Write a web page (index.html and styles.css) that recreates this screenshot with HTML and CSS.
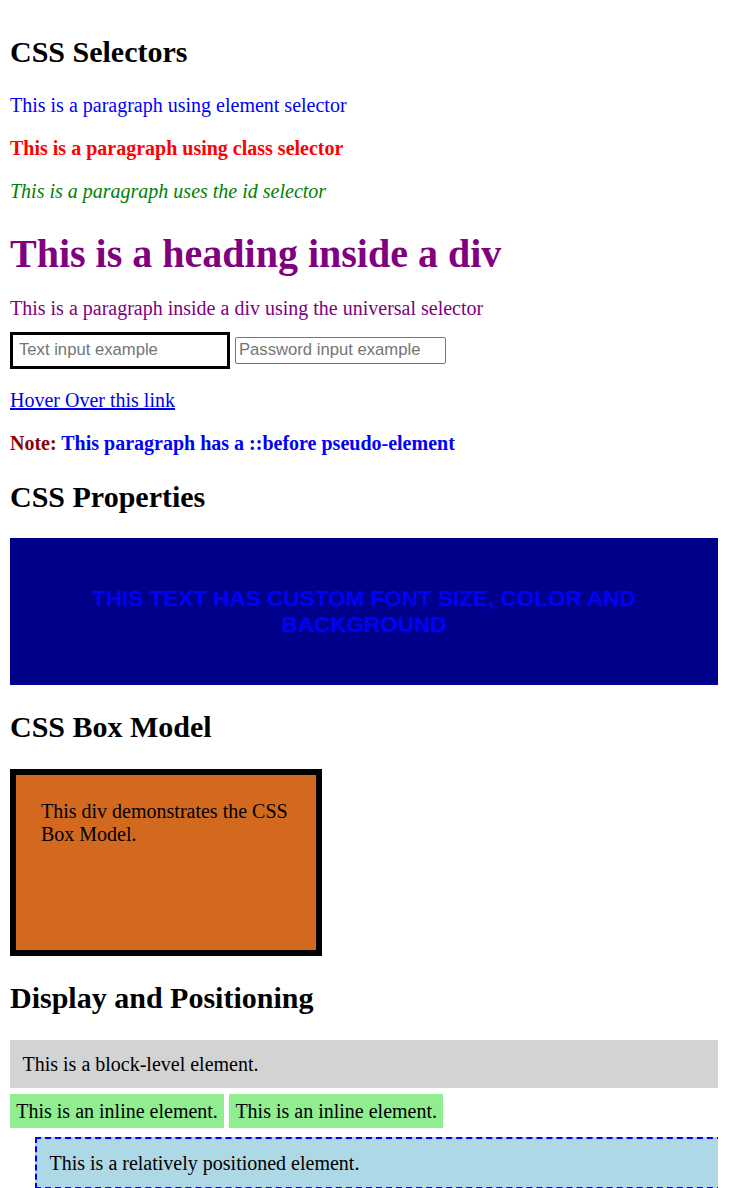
FILE: index.html
```html
<!DOCTYPE html>
<html lang="en">
<head>
<meta charset="utf-8">
<title>CSS Demo</title>
<link rel="stylesheet" href="styles.css">
</head>
<body>
<h2 class="section-title">CSS Selectors</h2>
<p class="element-para">This is a paragraph using element selector</p>
<p class="class-para">This is a paragraph using class selector</p>
<p class="id-para">This is a paragraph uses the id selector</p>
<div class="universal">
  <h1 class="universal-heading">This is a heading inside a div</h1>
  <p class="universal-para">This is a paragraph inside a div using the universal selector</p>
</div>
<div class="inputs">
  <input class="text-input" type="text" placeholder="Text input example">
  <input class="password-input" type="password" placeholder="Password input example">
</div>
<p class="link-para"><a class="hover-link" href="#">Hover Over this link</a></p>
<p class="note">This paragraph has a ::before pseudo-element</p>

<h2 class="section-title">CSS Properties</h2>
<div class="custom-box">This text has custom font size, color and background</div>

<h2 class="section-title">CSS Box Model</h2>
<div class="box-model">This div demonstrates the CSS Box Model.</div>

<h2 class="section-title">Display and Positioning</h2>
<div class="block-el">This is a block-level element.</div>
<div class="inline-row"><span class="inline-el">This is an inline element.</span> <span class="inline-el">This is an inline element.</span></div>
<div class="relative-el">This is a relatively positioned element.</div>
</body>
</html>
```

FILE: styles.css
```css
html {
  background: #ffffff;
}

body {
  margin: 10px;
  padding-top: 0.1px;
  width: 708px;
  font-family: "Liberation Serif", "Times New Roman", serif;
  font-size: 20px;
  color: #000000;
}

p {
  margin: 20px 0;
}

.section-title {
  font-size: 30px;
  font-weight: bold;
  margin: 24.9px 0;
}

.element-para {
  color: #0000ff;
}

.class-para {
  color: #ff0000;
  font-weight: bold;
}

.id-para {
  color: #008000;
  font-style: italic;
}

.universal {
  color: #800080;
}

.universal-heading {
  font-size: 40px;
  font-weight: bold;
  margin: 26.8px 0 20px;
}

.universal-para {
  margin: 20px 0 12.5px;
}

.inputs {
  margin: 12.5px 0 0;
}

.text-input,
.password-input {
  box-sizing: border-box;
  font-family: "Liberation Sans", Arial, sans-serif;
  font-size: 16.67px;
  color: #000000;
  background: #ffffff;
  outline: none;
}

.text-input::placeholder,
.password-input::placeholder {
  color: #757575;
}

.text-input {
  width: 220px;
  height: 36.5px;
  border: 3px solid #000000;
  padding: 6px;
}

.password-input {
  width: 211px;
  height: 27px;
  border: 1px solid #767676;
  border-radius: 2px;
  padding: 1px 3px;
}

.hover-link {
  color: #0000ee;
  text-decoration: underline;
}

.note {
  color: #0000ff;
  font-weight: bold;
}

.note::before {
  content: "Note: ";
  color: #8b0000;
}

.custom-box {
  background: #00008b;
  color: #0000ff;
  font-family: "Liberation Sans", Arial, sans-serif;
  font-size: 22.5px;
  font-weight: bold;
  text-transform: uppercase;
  text-align: center;
  padding: 47.5px 25px;
}

.box-model {
  width: 250px;
  height: 125px;
  padding: 25px;
  border: 6.25px solid #000000;
  background: #d2691e;
  color: #000000;
}

.block-el {
  background: #d3d3d3;
  padding: 12.5px;
  margin-bottom: 12px;
}

.inline-el {
  background: #90ee90;
  padding: 6.25px;
}

.relative-el {
  position: relative;
  left: 25px;
  margin-top: 14px;
  background: #add8e6;
  border: 2.5px dashed #0000ff;
  padding: 12.5px;
}
```
